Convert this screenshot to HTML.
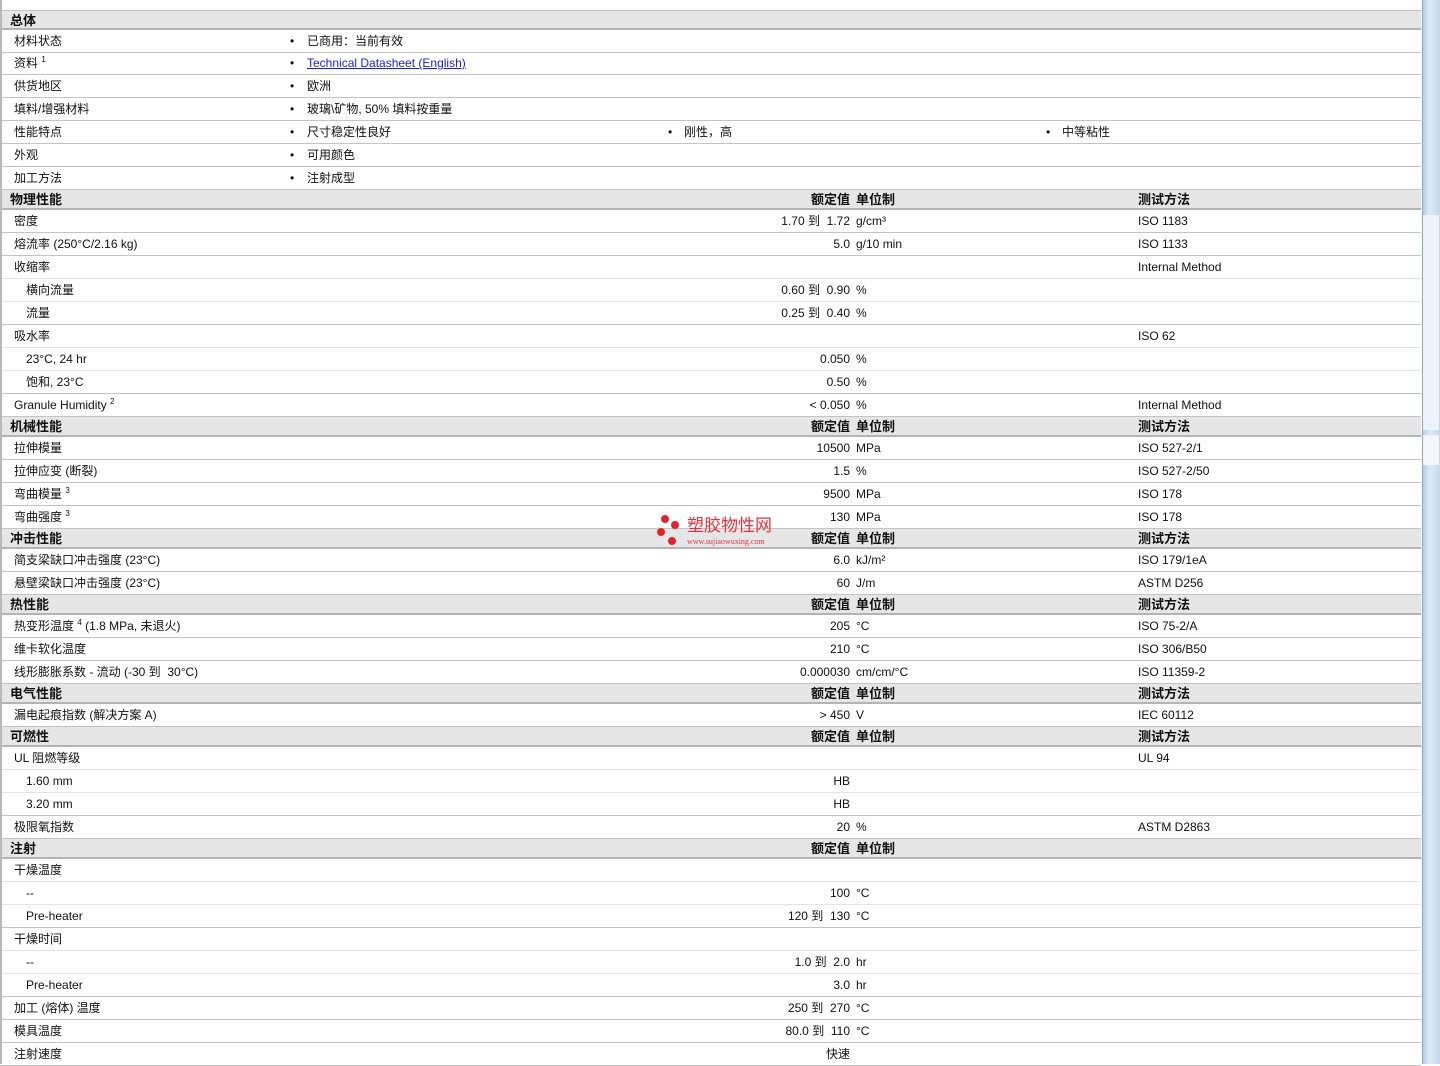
<!DOCTYPE html>
<html><head><meta charset="utf-8"><style>
body{margin:0;width:1440px;height:1064px;overflow:hidden;background:#fff;font-family:"Liberation Sans","Noto Sans CJK SC",sans-serif;font-size:12px;color:#111;position:relative}
.wrap{position:absolute;left:0;top:0;width:1421px;height:1064px}
.bl{position:absolute;left:0;top:0;width:2px;height:1064px;background:#b8b8b8;z-index:5}
.r{position:absolute;left:0;width:1421px;height:23px;border-bottom:1px solid #c4c4c4;box-sizing:border-box;line-height:22px}
.r.s{border-bottom-color:#e4e4e4}
.h{position:absolute;left:0;width:1421px;height:20px;background:#e6e6e6;border-bottom:2px solid #b4b4b4;box-sizing:border-box;line-height:19px;font-weight:bold;font-size:13px}
.r span,.h span{position:absolute;white-space:nowrap}
.l{left:14px}.l2{left:26px}.hl{left:10px}
.v{right:571px;text-align:right}
.u{left:856px}.m{left:1138px}
.b{left:290px}.b2{left:668px}.b3{left:1046px}
.t{left:307px}.t2{left:684px}.t3{left:1062px}
sup{font-size:8px;vertical-align:5px;line-height:0}
a{color:#1a1aff;text-decoration:underline}
.sb{position:absolute;left:1422px;top:0;width:17px;height:1064px;background:linear-gradient(90deg,#b8cde6,#dde9f7 40%,#c5d8ef);border-left:1px solid #8ea6c6}
.sb .g{position:absolute;left:0;width:16px;background:#edf3fb}
</style></head><body>
<div class="bl"></div>
<div class="wrap">
<div class="h" style="top:10px;border-top:1px solid #c4c4c4"><span class="hl">总体</span></div>
<div class="r" style="top:30px"><span class="l">材料状态</span><span class="b">•</span><span class="t">已商用：当前有效</span></div>
<div class="r" style="top:52px"><span class="l">资料 <sup>1</sup></span><span class="b">•</span><span class="t"><a>Technical Datasheet (English)</a></span></div>
<div class="r" style="top:75px"><span class="l">供货地区</span><span class="b">•</span><span class="t">欧洲</span></div>
<div class="r" style="top:98px"><span class="l">填料/增强材料</span><span class="b">•</span><span class="t">玻璃\矿物, 50% 填料按重量</span></div>
<div class="r" style="top:121px"><span class="l">性能特点</span><span class="b">•</span><span class="t">尺寸稳定性良好</span><span class="b2">•</span><span class="t2">刚性，高</span><span class="b3">•</span><span class="t3">中等粘性</span></div>
<div class="r" style="top:144px"><span class="l">外观</span><span class="b">•</span><span class="t">可用颜色</span></div>
<div class="r" style="top:167px"><span class="l">加工方法</span><span class="b">•</span><span class="t">注射成型</span></div>

<div class="h" style="top:190px"><span class="hl">物理性能</span><span class="v">额定值</span><span class="u">单位制</span><span class="m">测试方法</span></div>
<div class="r" style="top:210px"><span class="l">密度</span><span class="v">1.70 到&nbsp; 1.72</span><span class="u">g/cm³</span><span class="m">ISO 1183</span></div>
<div class="r" style="top:233px"><span class="l">熔流率 (250°C/2.16 kg)</span><span class="v">5.0</span><span class="u">g/10 min</span><span class="m">ISO 1133</span></div>
<div class="r s" style="top:256px"><span class="l">收缩率</span><span class="m">Internal Method</span></div>
<div class="r s" style="top:279px"><span class="l2">横向流量</span><span class="v">0.60 到&nbsp; 0.90</span><span class="u">%</span></div>
<div class="r" style="top:302px"><span class="l2">流量</span><span class="v">0.25 到&nbsp; 0.40</span><span class="u">%</span></div>
<div class="r s" style="top:325px"><span class="l">吸水率</span><span class="m">ISO 62</span></div>
<div class="r s" style="top:348px"><span class="l2">23°C, 24 hr</span><span class="v">0.050</span><span class="u">%</span></div>
<div class="r" style="top:371px"><span class="l2">饱和, 23°C</span><span class="v">0.50</span><span class="u">%</span></div>
<div class="r" style="top:394px"><span class="l">Granule Humidity <sup>2</sup></span><span class="v">&lt; 0.050</span><span class="u">%</span><span class="m">Internal Method</span></div>

<div class="h" style="top:417px"><span class="hl">机械性能</span><span class="v">额定值</span><span class="u">单位制</span><span class="m">测试方法</span></div>
<div class="r" style="top:437px"><span class="l">拉伸模量</span><span class="v">10500</span><span class="u">MPa</span><span class="m">ISO 527-2/1</span></div>
<div class="r" style="top:460px"><span class="l">拉伸应变 (断裂)</span><span class="v">1.5</span><span class="u">%</span><span class="m">ISO 527-2/50</span></div>
<div class="r" style="top:483px"><span class="l">弯曲模量 <sup>3</sup></span><span class="v">9500</span><span class="u">MPa</span><span class="m">ISO 178</span></div>
<div class="r" style="top:506px"><span class="l">弯曲强度 <sup>3</sup></span><span class="v">130</span><span class="u">MPa</span><span class="m">ISO 178</span></div>

<div class="h" style="top:529px"><span class="hl">冲击性能</span><span class="v">额定值</span><span class="u">单位制</span><span class="m">测试方法</span></div>
<div class="r" style="top:549px"><span class="l">简支梁缺口冲击强度 (23°C)</span><span class="v">6.0</span><span class="u">kJ/m²</span><span class="m">ISO 179/1eA</span></div>
<div class="r" style="top:572px"><span class="l">悬壁梁缺口冲击强度 (23°C)</span><span class="v">60</span><span class="u">J/m</span><span class="m">ASTM D256</span></div>

<div class="h" style="top:595px"><span class="hl">热性能</span><span class="v">额定值</span><span class="u">单位制</span><span class="m">测试方法</span></div>
<div class="r" style="top:615px"><span class="l">热变形温度 <sup>4</sup> (1.8 MPa, 未退火)</span><span class="v">205</span><span class="u">°C</span><span class="m">ISO 75-2/A</span></div>
<div class="r" style="top:638px"><span class="l">维卡软化温度</span><span class="v">210</span><span class="u">°C</span><span class="m">ISO 306/B50</span></div>
<div class="r" style="top:661px"><span class="l">线形膨胀系数 - 流动 (-30 到&nbsp; 30°C)</span><span class="v">0.000030</span><span class="u">cm/cm/°C</span><span class="m">ISO 11359-2</span></div>

<div class="h" style="top:684px"><span class="hl">电气性能</span><span class="v">额定值</span><span class="u">单位制</span><span class="m">测试方法</span></div>
<div class="r" style="top:704px"><span class="l">漏电起痕指数 (解决方案 A)</span><span class="v">&gt; 450</span><span class="u">V</span><span class="m">IEC 60112</span></div>

<div class="h" style="top:727px"><span class="hl">可燃性</span><span class="v">额定值</span><span class="u">单位制</span><span class="m">测试方法</span></div>
<div class="r s" style="top:747px"><span class="l">UL 阻燃等级</span><span class="m">UL 94</span></div>
<div class="r s" style="top:770px"><span class="l2">1.60 mm</span><span class="v">HB</span></div>
<div class="r" style="top:793px"><span class="l2">3.20 mm</span><span class="v">HB</span></div>
<div class="r" style="top:816px"><span class="l">极限氧指数</span><span class="v">20</span><span class="u">%</span><span class="m">ASTM D2863</span></div>

<div class="h" style="top:839px"><span class="hl">注射</span><span class="v">额定值</span><span class="u">单位制</span></div>
<div class="r s" style="top:859px"><span class="l">干燥温度</span></div>
<div class="r s" style="top:882px"><span class="l2">--</span><span class="v">100</span><span class="u">°C</span></div>
<div class="r" style="top:905px"><span class="l2">Pre-heater</span><span class="v">120 到&nbsp; 130</span><span class="u">°C</span></div>
<div class="r s" style="top:928px"><span class="l">干燥时间</span></div>
<div class="r s" style="top:951px"><span class="l2">--</span><span class="v">1.0 到&nbsp; 2.0</span><span class="u">hr</span></div>
<div class="r" style="top:974px"><span class="l2">Pre-heater</span><span class="v">3.0</span><span class="u">hr</span></div>
<div class="r" style="top:997px"><span class="l">加工 (熔体) 温度</span><span class="v">250 到&nbsp; 270</span><span class="u">°C</span></div>
<div class="r" style="top:1020px"><span class="l">模具温度</span><span class="v">80.0 到&nbsp; 110</span><span class="u">°C</span></div>
<div class="r" style="top:1043px"><span class="l">注射速度</span><span class="v">快速</span></div>

<div style="position:absolute;left:657px;top:514px;width:130px;height:36px">
<div style="position:absolute;left:4px;top:1px;width:8px;height:8px;border-radius:50%;background:#e8202a"></div>
<div style="position:absolute;left:14px;top:7px;width:8px;height:8px;border-radius:50%;background:#e8202a"></div>
<div style="position:absolute;left:0;top:14px;width:8px;height:8px;border-radius:50%;background:#e8202a"></div>
<div style="position:absolute;left:11px;top:23px;width:8px;height:8px;border-radius:50%;background:#e8202a"></div>
<div style="position:absolute;left:30px;top:3px;font-size:17px;color:#e8303a;line-height:18px;white-space:nowrap">塑胶物性网</div>
<div style="position:absolute;left:30px;top:23px;font-size:8px;color:#e8303a;font-family:'Liberation Serif',serif;white-space:nowrap">www.sujiaowuxing.com</div>
</div>
</div>
<div class="sb">
<div class="g" style="top:215px;height:215px"></div>
<div class="g" style="top:435px;height:30px;background:#f3f7fc"></div>
</div>
</body></html>
